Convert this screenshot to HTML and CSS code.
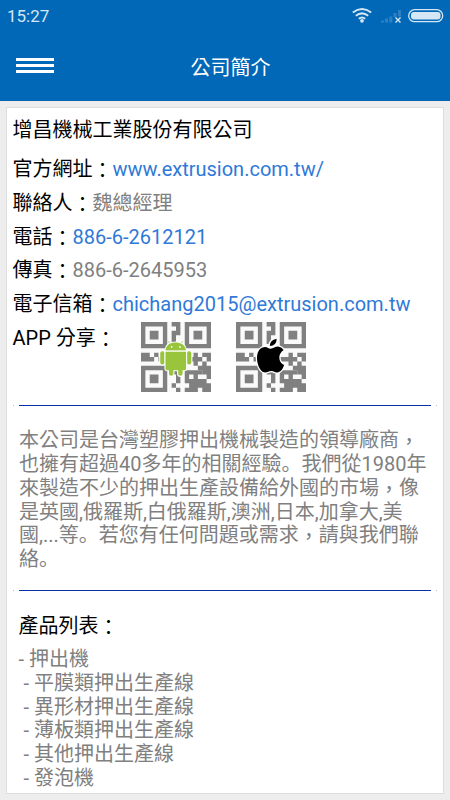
FILE: index.html
```
<!DOCTYPE html>
<html lang="zh-Hant">
<head>
<meta charset="utf-8">
<title>公司簡介</title>
<link rel="stylesheet" href="styles.css">
</head>
<body>
<header class="top">
  <div class="status">
    <span class="time">15:27</span>
    <svg class="status-icons" width="94" height="20" viewBox="0 0 94 20">
      <path fill="none" stroke="#d5e6f4" stroke-width="2" d="M1.800 6.500Q11 -.5 20.200 6.500M4.800 9.800Q11 5 17.200 9.800M7.800 12.800Q11 10.200 14.200 12.800"/>
      <circle cx="11" cy="14.800" r="1.900" fill="#d5e6f4"/>
      <path fill="#2f80c2" d="M30 14.500h3v2h-3zM34 12.500h3v4h-3zM38.300 10.500h3v6h-3zM42.500 7h3v4h-3zM47 4h3v6.500h-3z"/>
      <path d="M44.500 11.500l5 5M49.500 11.500l-5 5" stroke="#d5e6f4" stroke-width="1.400"/>
      <rect x="57.700" y="3.700" width="34" height="12" rx="6" fill="none" stroke="#d5e6f4" stroke-width="1.300"/>
      <rect x="60" y="6" width="29.500" height="7.500" rx="3" fill="#d5e6f4"/>
    </svg>
  </div>
  <div class="bar">
    <div class="menu"><i></i><i></i><i></i></div>
    <h1>公司簡介</h1>
  </div>
</header>
<main class="card">
  <h2>增昌機械工業股份有限公司</h2>
  <dl>
    <div><dt>官方網址<span class="mark">：</span></dt><dd class="link">www.extrusion.com.tw/</dd></div>
    <div><dt>聯絡人<span class="mark">：</span></dt><dd>魏總經理</dd></div>
    <div><dt>電話<span class="mark">：</span></dt><dd class="link">886-6-2612121</dd></div>
    <div><dt>傳真<span class="mark">：</span></dt><dd>886-6-2645953</dd></div>
    <div><dt>電子信箱<span class="mark">：</span></dt><dd class="link">chichang2015@extrusion.com.tw</dd></div>
  </dl>
  <div class="share">
    <span class="share-label">APP 分享<span class="mark">：</span></span>
    <svg class="qr" width="70" height="70" viewBox="0 0 16 16">
      <defs>
        <path id="finder" fill="#808080" fill-rule="evenodd" d="M0 0h6v6H0zM1 1v4h4V1zM2 2h2v2H2z"/>
        <g id="code">
          <use href="#finder"/><use href="#finder" x="10"/><use href="#finder" y="10"/>
          <path fill="#808080" d="M7 0h2v3H8v2H7V2h1V1H7zM0 7h2v1h1v1H0zM3 7h1v1H3zM4 8h1v1H4z"/>
          <path fill="#808080" d="M12 7h1v1h1v1h-1v1h-1V9h-2V8h2zM14 7h2v2h-1V8h-1zM14 9h1v1h1v3h-1v-1h-1v-1h-1v-1h1z"/>
          <path fill="#808080" fill-rule="evenodd" d="M10 11h4v1h-1v1h2v1h1v1h-1v1h-1v-1h-1v1h-3v-1h1v-1h-1zM11 12v1h1v-1zM15 15h1v1h-1z"/>
          <path fill="#808080" d="M7 11h2v3H8v-2H7zM7 14h1v1H7zM8 15h1v1H8z"/>
        </g>
      </defs>
      <rect width="16" height="16" fill="#fafafa"/>
      <use href="#code"/>
      <g fill="#98c53c" stroke="#fff" stroke-width=".5" paint-order="stroke" stroke-linejoin="round">
        <path d="M6.300 4.400l.6 1M9.500 4.400l-.6 1" stroke="#98c53c" stroke-width=".2"/>
        <path d="M5.600 6.500C5.700 5.200 6.700 4.700 7.900 4.700S10.100 5.200 10.300 6.500z"/>
        <rect x="4.400" y="6.700" width="1" height="3" rx=".45"/>
        <rect x="10.500" y="6.700" width="1" height="3" rx=".45"/>
        <path d="M5.600 6.800h4.700v3.900q0 .3-.3.300h-.5v.9q0 .4-.5.400t-.5-.4v-.9h-1.100v.9q0 .4-.5.400t-.5-.4v-.9H5.900q-.3 0-.3-.3z"/>
      </g>
      <circle cx="7" cy="5.700" r=".2" fill="#fff"/><circle cx="8.900" cy="5.700" r=".2" fill="#fff"/>
    </svg>
    <svg class="qr" width="70" height="70" viewBox="0 0 16 16">
      <rect width="16" height="16" fill="#fafafa"/>
      <use href="#code"/>
      <g stroke="#fff" stroke-width=".6" paint-order="stroke">
        <path d="M7.700 5.500Q7.700 4.100 9.300 3.800Q9.300 5.300 7.700 5.500z"/>
        <path d="M7.900 6.100C8.500 6.100 9 5.600 9.600 5.600Q10.400 5.700 10.900 6.400Q9.900 7.100 9.900 8.100Q9.900 9.300 11 9.800Q10.600 11.100 9.700 11.500C9 11.700 8.700 11.200 8.100 11.200C7.400 11.200 7.100 11.600 6.400 11.500C5.500 11.200 4.800 9.700 4.800 8.200C4.800 6.600 5.600 5.700 6.700 5.700C7.200 5.700 7.500 6.100 7.900 6.100z"/>
      </g>
    </svg>
  </div>
  <hr>
  <p>本公司是台灣塑膠押出機械製造的領導廠商<span class="mark">，</span><br>也擁有超過40多年的相關經驗<span class="stop" lang="zh-CN">。</span>我們從1980年<br>來製造不少的押出生產設備給外國的市場<span class="mark">，</span>像<br>是英國,俄羅斯,白俄羅斯,澳洲,日本,加拿大,美<br>國,...等<span class="stop" lang="zh-CN">。</span>若您有任何問題或需求<span class="mark">，</span>請與我們聯<br>絡<span class="stop" lang="zh-CN">。</span></p>
  <hr>
  <h3>產品列表<span class="mark">：</span></h3>
  <ul>
    <li>- 押出機</li>
    <li> - 平膜類押出生產線</li>
    <li> - 異形材押出生產線</li>
    <li> - 薄板類押出生產線</li>
    <li> - 其他押出生產線</li>
    <li> - 發泡機</li>
  </ul>
</main>
</body>
</html>
```
FILE: styles.css
```
* { box-sizing: border-box; margin: 0; padding: 0; }
body {
  height: 800px;
  overflow: hidden;
  background: #ededed;
  color: #000;
  font: 20px/24px Roboto, "Noto Sans CJK TC", sans-serif;
}
.top { height: 101px; background: #0068b7; color: #fff; }
.status { display: flex; justify-content: space-between; height: 32px; padding: 6px 5px 0 7px; }
.time { font-size: 17px; line-height: 20px; color: #d5e6f4; }
.bar { display: grid; grid-template-columns: 38px 1fr 38px; align-items: center; height: 68px; padding: 0 5px 0 16px; }
.menu { display: grid; gap: 3px; margin-bottom: 1px; }
.menu i { height: 3px; background: #fff; }
h1, h2, h3 { font-size: 20px; font-weight: 400; }
h1 { text-align: center; padding-top: 4px; }
.card { width: 438px; height: 687px; margin: 6px 0 0 6px; padding: 10px 12px 0 5.500px; background: #fff; border: 1px solid #dedede; }
h2 { line-height: 24px; margin-bottom: 10px; }
dl > div { display: flex; height: 33.800px; line-height: 34px; }
dd { color: #808080; }
.link { color: #2f79d8; }
.mark { line-height: 0; vertical-align: -2px; }
.share { display: flex; height: 84px; }
.share-label { width: 128px; line-height: 34px; }
.qr { margin: 1px 25px 0 0; }
hr {
  border: 0;
  height: 1px;
  margin: 0 -6px 0 0;
  background: linear-gradient(90deg, #a9bfe6 1px, transparent 1px 6px, #0a2fa8 6px calc(100% - 6px), transparent calc(100% - 6px) calc(100% - 1px), #a9bfe6 calc(100% - 1px));
}
p { margin: 23.500px -10px 0 6.500px; height: 160.500px; line-height: 23.700px; color: #808080; white-space: nowrap; }
.stop { font-family: "Noto Sans CJK SC", sans-serif; line-height: 0; }
h3 { margin: 23px 0 10.300px 6px; }
ul { list-style: none; margin-left: 6px; color: #808080; line-height: 23.700px; }
li { height: 23.700px; white-space: pre; }
```
